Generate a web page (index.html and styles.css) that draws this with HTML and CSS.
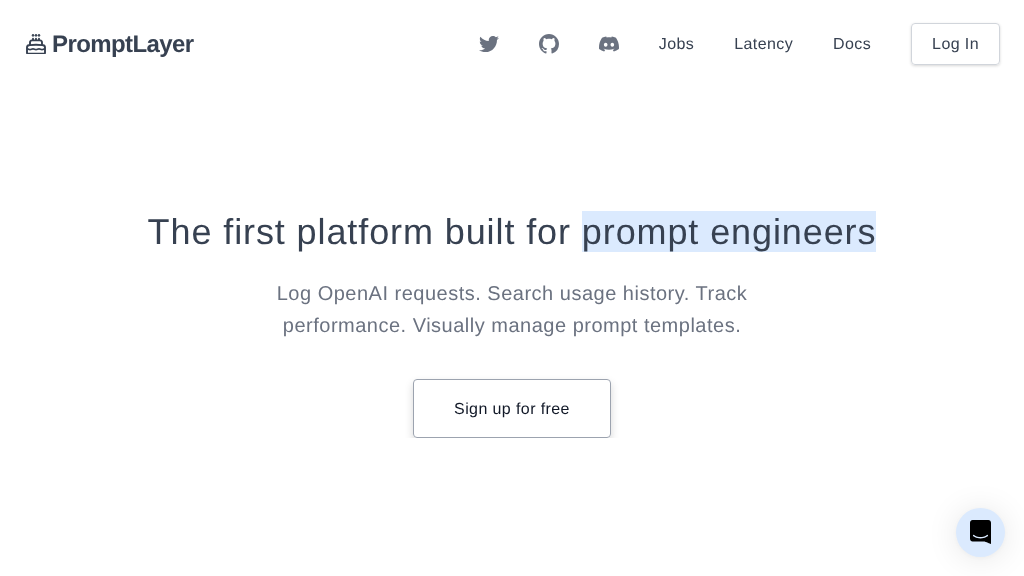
FILE: index.html
```html
<!DOCTYPE html>
<html lang="en">
<head>
  <meta charset="UTF-8">
  <meta name="viewport" content="width=device-width, initial-scale=1.0">
  <title>PromptLayer</title>
  <link rel="stylesheet" href="styles.css">
</head>
<body>
  <header class="topbar">
    <a class="logo" href="#">
      <svg class="logo-icon" viewBox="2 2 20 20" fill="none" stroke="currentColor" stroke-width="1.9" stroke-linecap="round" stroke-linejoin="round"><path d="M12 8.25v-1.5m0 1.5c-1.355 0-2.697.056-4.024.166C6.845 8.51 6 9.473 6 10.608v2.513m6-4.87c1.355 0 2.697.055 4.024.165C17.155 8.51 18 9.473 18 10.608v2.513m-3-4.87v-1.5m-6 1.5v-1.5m12 9.75l-1.5.75a3.354 3.354 0 01-3 0 3.354 3.354 0 00-3 0 3.354 3.354 0 01-3 0 3.354 3.354 0 00-3 0 3.354 3.354 0 01-3 0L3 16.5m15-3.38a48.474 48.474 0 00-6-.37c-2.032 0-4.034.125-6 .37m12 0c.39.049.777.102 1.163.16 1.07.16 1.837 1.094 1.837 2.175v5.17c0 .62-.504 1.124-1.125 1.124H4.125A1.125 1.125 0 013 20.625v-5.17c0-1.08.768-2.014 1.837-2.174A47.78 47.78 0 016 13.12M12.265 3.11a.375.375 0 11-.53 0L12 2.845l.265.265zm-3 0a.375.375 0 11-.53 0L9 2.845l.265.265zm6 0a.375.375 0 11-.53 0L15 2.845l.265.265z"/></svg>
      <span class="logo-text">PromptLayer</span>
    </a>
    <nav class="nav">
      <a class="nav-icon" href="#" aria-label="Twitter">
        <svg viewBox="0 0 512 512" fill="currentColor"><path d="M459.37 151.716c.325 4.548.325 9.097.325 13.645 0 138.72-105.583 298.558-298.558 298.558-59.452 0-114.68-17.219-161.137-47.106 8.447.974 16.568 1.299 25.34 1.299 49.055 0 94.213-16.568 130.274-44.832-46.132-.975-84.792-31.188-98.112-72.772 6.498.974 12.995 1.624 19.818 1.624 9.421 0 18.843-1.3 27.614-3.573-48.081-9.747-84.143-51.98-84.143-102.985v-1.299c13.969 7.797 30.214 12.67 47.431 13.319-28.264-18.843-46.781-51.005-46.781-87.391 0-19.492 5.197-37.36 14.294-52.954 51.655 63.675 129.3 105.258 216.365 109.807-1.624-7.797-2.599-15.918-2.599-24.04 0-57.828 46.782-104.934 104.934-104.934 30.213 0 57.502 12.67 76.67 33.137 23.715-4.548 46.456-13.32 66.599-25.34-7.798 24.366-24.366 44.833-46.132 57.827 21.117-2.273 41.584-8.122 60.426-16.243-14.292 20.791-32.161 39.308-52.628 54.253z"/></svg>
      </a>
      <a class="nav-icon" href="#" aria-label="GitHub">
        <svg viewBox="0 0 16 16" fill="currentColor"><path d="M8 0C3.58 0 0 3.58 0 8c0 3.54 2.29 6.53 5.47 7.59.4.07.55-.17.55-.38 0-.19-.01-.82-.01-1.49-2.01.37-2.53-.49-2.69-.94-.09-.23-.48-.94-.82-1.13-.28-.15-.68-.52-.01-.53.63-.01 1.08.58 1.23.82.72 1.21 1.87.87 2.33.66.07-.52.28-.87.51-1.07-1.78-.2-3.64-.89-3.64-3.95 0-.87.31-1.59.82-2.15-.08-.2-.36-1.02.08-2.12 0 0 .67-.21 2.2.82.64-.18 1.32-.27 2-.27.68 0 1.36.09 2 .27 1.53-1.04 2.2-.82 2.2-.82.44 1.1.16 1.92.08 2.12.51.56.82 1.27.82 2.15 0 3.07-1.87 3.75-3.65 3.95.29.25.54.73.54 1.48 0 1.07-.01 1.93-.01 2.2 0 .21.15.46.55.38A8.013 8.013 0 0016 8c0-4.42-3.58-8-8-8z"/></svg>
      </a>
      <a class="nav-icon" href="#" aria-label="Discord">
        <svg viewBox="0 0 24 24" fill="currentColor"><path d="M20.317 4.3698a19.7913 19.7913 0 00-4.8851-1.5152.0741.0741 0 00-.0785.0371c-.211.3753-.4447.8648-.6083 1.2495-1.8447-.2762-3.68-.2762-5.4868 0-.1636-.3933-.4058-.8742-.6177-1.2495a.077.077 0 00-.0785-.037 19.7363 19.7363 0 00-4.8852 1.515.0699.0699 0 00-.0321.0277C.5334 9.0458-.319 13.5799.0992 18.0578a.0824.0824 0 00.0312.0561c2.0528 1.5076 4.0413 2.4228 5.9929 3.0294a.0777.0777 0 00.0842-.0276c.4616-.6304.8731-1.2952 1.226-1.9942a.076.076 0 00-.0416-.1057c-.6528-.2476-1.2743-.5495-1.8722-.8923a.077.077 0 01-.0076-.1277c.1258-.0943.2517-.1923.3718-.2914a.0743.0743 0 01.0776-.0105c3.9278 1.7933 8.18 1.7933 12.0614 0a.0739.0739 0 01.0785.0095c.1202.099.246.1981.3728.2924a.077.077 0 01-.0066.1276 12.2986 12.2986 0 01-1.873.8914.0766.0766 0 00-.0407.1067c.3604.698.7719 1.3628 1.225 1.9932a.076.076 0 00.0842.0286c1.961-.6067 3.9495-1.5219 6.0023-3.0294a.077.077 0 00.0313-.0552c.5004-5.177-.8382-9.6739-3.5485-13.6604a.061.061 0 00-.0312-.0286zM8.02 15.3312c-1.1825 0-2.1569-1.0857-2.1569-2.419 0-1.3332.9555-2.4189 2.157-2.4189 1.2108 0 2.1757 1.0952 2.1568 2.419 0 1.3332-.9555 2.4189-2.1569 2.4189zm7.9748 0c-1.1825 0-2.1569-1.0857-2.1569-2.419 0-1.3332.9554-2.4189 2.1569-2.4189 1.2108 0 2.1757 1.0952 2.1568 2.419 0 1.3332-.946 2.4189-2.1568 2.4189Z"/></svg>
      </a>
      <a class="nav-link" href="#">Jobs</a>
      <a class="nav-link" href="#">Latency</a>
      <a class="nav-link" href="#">Docs</a>
      <a class="login" href="#">Log In</a>
    </nav>
  </header>

  <main class="hero">
    <h1>The first platform built for <span class="highlight">prompt engineers</span></h1>
    <p>Log OpenAI requests. Search usage history. Track performance. Visually manage prompt templates.</p>
    <a class="signup" href="#">Sign up for free</a>
  </main>

  <button class="chat" aria-label="Open chat">
    <svg viewBox="0 0 28 32" fill="currentColor"><path d="M28 32s-4.714-1.855-8.527-3.34H3.437C1.54 28.66 0 27.026 0 25.013V3.644C0 1.633 1.54 0 3.437 0h21.125c1.898 0 3.437 1.632 3.437 3.645v18.404H28V32zm-4.139-11.982a.88.88 0 00-1.292-.105c-.03.026-3.015 2.681-8.57 2.681-5.486 0-8.517-2.636-8.571-2.684a.88.88 0 00-1.29.107 1.01 1.01 0 00-.219.708.992.992 0 00.318.664c.142.128 3.537 3.15 9.762 3.15 6.226 0 9.621-3.022 9.763-3.15a.992.992 0 00.317-.664 1.01 1.01 0 00-.218-.707z"/></svg>
  </button>
</body>
</html>
```

FILE: styles.css
```css
* {
  box-sizing: border-box;
}

body {
  margin: 0;
  font-family: "Liberation Sans", Arial, sans-serif;
  line-height: 24px;
  text-rendering: geometricPrecision;
  background: #fff;
  color: #374151;
}

a {
  color: inherit;
  text-decoration: none;
}

/* Own layer, so the text gets greyscale antialiasing */
.topbar,
.hero {
  will-change: opacity;
}

/* Header */
.topbar {
  display: flex;
  justify-content: space-between;
  align-items: center;
  padding: 23px 24px 23px 26px;
}

.logo {
  display: flex;
  align-items: center;
  gap: 6px;
  font-size: 24px;
  line-height: 32px;
  font-weight: 700;
  letter-spacing: -0.6px;
}

.logo-icon {
  width: 20px;
  height: 20px;
}

.logo-text {
  padding-top: 1px;
}

.nav {
  display: flex;
  align-items: center;
  gap: 40px;
}

.nav-icon {
  display: flex;
  color: #6b7280;
}

.nav-icon svg {
  width: 20px;
  height: 20px;
}

.nav-link {
  padding-top: 1px;
  font-size: 16px;
  letter-spacing: 0.4px;
}

.login {
  padding: 9px 20px 7px;
  font-size: 16px;
  letter-spacing: 0.4px;
  border: 1px solid #d1d5db;
  border-radius: 4px;
  box-shadow: 0 1px 3px rgba(0, 0, 0, 0.16);
}

/* Hero */
.hero {
  display: flex;
  flex-direction: column;
  align-items: center;
  padding-top: 124px;
  text-align: center;
}

h1 {
  margin: 0;
  font-size: 36px;
  font-weight: 400;
  line-height: 40px;
  letter-spacing: 0.9px;
}

.highlight {
  background: #dbeafe;
}

.hero p {
  width: 576px;
  margin: 26px 0 0;
  font-size: 20px;
  line-height: 32px;
  letter-spacing: 0.5px;
  color: #6b7280;
}

.signup {
  margin-top: 37px;
  padding: 18px 40px 15px;
  font-size: 16px;
  letter-spacing: 0.4px;
  color: #111827;
  border: 1px solid #9ca3af;
  border-radius: 4px;
  box-shadow: 0 4px 8px rgba(0, 0, 0, 0.16);
}

/* Chat launcher */
.chat {
  position: fixed;
  right: 19.5px;
  bottom: 19px;
  display: flex;
  align-items: center;
  justify-content: center;
  width: 49px;
  height: 49px;
  padding: 0 0 2px;
  color: #000;
  background: #dbeafe;
  border: none;
  border-radius: 50%;
  box-shadow: 0 1px 6px rgba(0, 0, 0, 0.04), 0 2px 32px rgba(0, 0, 0, 0.1);
}

.chat svg {
  width: 21px;
  height: 24px;
}
```
